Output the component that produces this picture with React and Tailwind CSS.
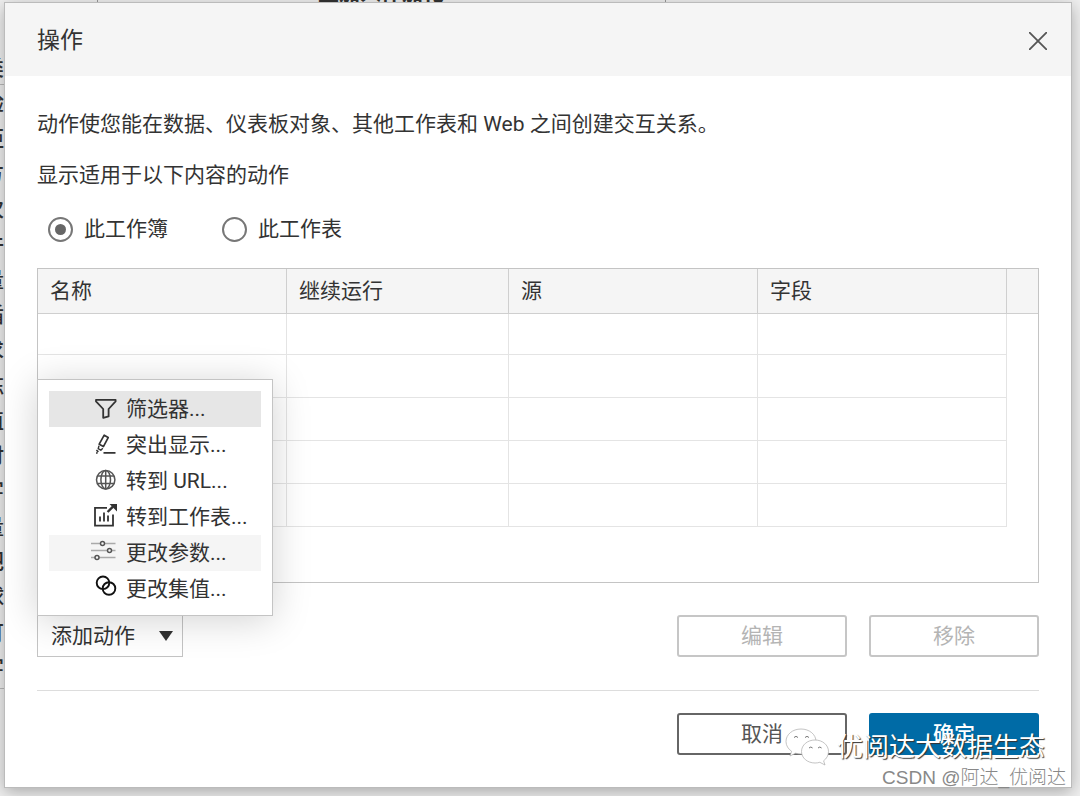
import { useState } from 'react'

const sidebarItems = ['类', '验', '距', '方', '次', '件', '量', '循', '求', '陈', '值', '时', '字', '量', '把', '球', '可', '字']

const columns = [
  { label: '名称', width: 'w-[249px]' },
  { label: '继续运行', width: 'w-[222px]' },
  { label: '源', width: 'w-[249px]' },
  { label: '字段', width: 'w-[249px]' },
]

function FilterIcon() {
  return (
    <svg width="28" height="28" viewBox="0 0 28 28" fill="none" stroke="#333" strokeWidth="1.8" strokeLinejoin="round">
      <path d="M5 4.800h19.600v1.600L17.600 14v7.400l-5.400 1.400V14L5 6.400z" />
    </svg>
  )
}

function HighlightIcon() {
  return (
    <svg width="28" height="28" viewBox="0 0 28 28" fill="none" stroke="#333" strokeWidth="1.7" strokeLinejoin="round">
      <path d="M13.200 4.200l4 2.400-4.800 9-4.200-2.400z" />
      <path d="M8 14.800l-.8 2.800 2.600 1.600 2-2" strokeWidth="1.400" />
      <path d="M12.500 21.800h12M5.400 19.200l2 1.600M5 22h1.600" />
    </svg>
  )
}

function GlobeIcon() {
  return (
    <svg width="28" height="28" viewBox="0 0 28 28" fill="none" stroke="#555" strokeWidth="1.5">
      <circle cx="14.700" cy="12.700" r="9.200" />
      <ellipse cx="14.700" cy="12.700" rx="4.800" ry="9.200" />
      <path d="M14.700 3.500v18.400M6.500 9h16.400M6.500 16.400h16.400" />
    </svg>
  )
}

function SheetIcon() {
  return (
    <svg width="28" height="28" viewBox="0 0 28 28" fill="none" stroke="#333" strokeWidth="1.8">
      <path d="M16 4.800H4v17.800h18V11.500" />
      <path d="M9 18.500v-5M13 18.500v-9M17 18.500v-6" />
      <path d="M16.600 9L22 3.600" strokeWidth="2.400" />
      <path d="M18.500 1H26v7.500z" fill="#333" stroke="none" />
    </svg>
  )
}

function ParameterIcon() {
  return (
    <svg width="28" height="28" viewBox="0 0 28 28" fill="none">
      <path d="M0 4.500h24.500M0 11.500h24.500M0 18.500h24.500" stroke="#aaa" strokeWidth="1.300" />
      <g fill="#f5f5f5" stroke="#555" strokeWidth="1.500">
        <circle cx="11.500" cy="4.500" r="2" />
        <circle cx="18.500" cy="11.500" r="2" />
        <circle cx="6" cy="18.500" r="2" />
      </g>
    </svg>
  )
}

function SetIcon() {
  return (
    <svg width="28" height="28" viewBox="0 0 28 28" fill="none" stroke="#111" strokeWidth="1.900">
      <circle cx="12" cy="7.800" r="6.300" />
      <circle cx="18" cy="13.500" r="6.300" />
    </svg>
  )
}

const menuItems = [
  { label: '筛选器...', icon: FilterIcon, className: 'bg-[#e6e6e6]' },
  { label: '突出显示...', icon: HighlightIcon, className: '' },
  { label: '转到 URL...', icon: GlobeIcon, className: '' },
  { label: '转到工作表...', icon: SheetIcon, className: '' },
  { label: '更改参数...', icon: ParameterIcon, className: 'bg-[#f5f5f5]' },
  { label: '更改集值...', icon: SetIcon, className: '' },
]

function ScopeOption({ value, label, scope, onChange }) {
  return (
    <label className="flex items-center gap-[11px]">
      <input
        type="radio"
        name="scope"
        value={value}
        checked={scope === value}
        onChange={() => onChange(value)}
        className="grid size-[25px] appearance-none place-content-center rounded-full border-2 border-[#777] bg-white before:size-[11px] before:rounded-full before:bg-transparent checked:before:bg-[#666]"
      />
      {label}
    </label>
  )
}

function AddActionMenu() {
  return (
    <div className="relative">
      <button
        type="button"
        aria-haspopup="menu"
        className="flex h-[42px] items-center gap-6 border border-[#c4c4c4] bg-white pr-[9px] pl-[13px]"
      >
        添加动作
        <svg width="14" height="10" viewBox="0 0 14 10" fill="#333">
          <path d="M0 0h14L7 10z" />
        </svg>
      </button>
      <div
        role="menu"
        className="absolute bottom-[41px] left-0 w-[236px] border border-[#c4c4c4] bg-white px-[11px] pt-[11px] pb-2 shadow-[0_4px_36px_rgba(0,0,0,0.18)]"
      >
        {menuItems.map(({ label, icon: Icon, className }) => (
          <button
            key={label}
            type="button"
            role="menuitem"
            className={`flex h-9 w-full items-center gap-[7px] pl-[42px] whitespace-nowrap ${className}`}
          >
            <Icon />
            {label}
          </button>
        ))}
      </div>
    </div>
  )
}

function Watermark() {
  return (
    <div className="pointer-events-none absolute right-[14px] bottom-[6px] flex flex-col items-end text-white">
      <div className="mr-[21px] flex items-center gap-2">
        <svg width="44" height="38" viewBox="0 0 44 38" fill="#fff" stroke="#aaa" strokeWidth="0.7">
          <path d="M16 1C7.500 1 1 6.500 1 13.500c0 4 2.200 7.500 5.600 9.800L5 28l5.600-2.800c1.700.5 3.500.8 5.400.8 8.500 0 15-5.500 15-12.500S24.500 1 16 1z" />
          <path d="M30 12c-7.500 0-13.500 5-13.500 11.500S22.500 35 30 35c1.700 0 3.300-.2 4.800-.7L40 37l-1.400-4.200c3-2.100 4.900-5.500 4.900-9.300C43.500 17 37.500 12 30 12z" />
          <g fill="none" stroke="#777" strokeWidth="1">
            <path d="M9 9.500q2-2.400 4 0M20 9.500q2-2.400 4 0M24 20q1.800-2 3.600 0M33 20q1.800-2 3.600 0" />
          </g>
        </svg>
        <span className="text-[26px] leading-9 [text-shadow:1px_1px_1px_#333]">优阅达大数据生态</span>
      </div>
      <span className="font-['Liberation_Sans','Noto_Sans_CJK_SC',sans-serif] text-[19px] leading-6 font-light text-[#888]">
        CSDN @阿达_优阅达
      </span>
    </div>
  )
}

export default function App() {
  const [scope, setScope] = useState('workbook')

  return (
    <div className="relative isolate flex min-h-screen flex-col overflow-hidden bg-[#f0f0f0] pt-[2px] pr-2 pb-2 pl-1 font-[Roboto,'Noto_Sans_CJK_SC',sans-serif] text-[21px] leading-[30px] text-[#333]">
      <div className="absolute top-[53px] bottom-[113px] -left-[17px] -z-10 flex flex-col justify-between font-medium" aria-hidden="true">
        {sidebarItems.map((item, index) => (
          <span key={index}>{item}</span>
        ))}
      </div>
      <div className="absolute top-[84px] bottom-[107px] left-0 -z-10 w-1 border-y border-[#bbb]"></div>
      <div className="absolute top-0 left-[97px] -z-10 h-1 w-[569px] border-x border-[#999]"></div>
      <div className="absolute -top-[19px] left-[318px] -z-10 leading-6 font-bold" aria-hidden="true">
        重加入作加化
      </div>

      <section
        role="dialog"
        aria-labelledby="dialog-title"
        className="flex flex-1 flex-col border border-[#bbb] bg-white shadow-[0_4px_16px_rgba(0,0,0,0.3)]"
      >
        <header className="flex h-[73px] items-center justify-between bg-[#f5f5f5] pt-[3px] pr-6 pl-8">
          <h1 id="dialog-title" className="text-[23px]">操作</h1>
          <button type="button" aria-label="关闭">
            <svg width="18" height="18" viewBox="0 0 18 18" stroke="#555" strokeWidth="1.800">
              <path d="M0 0l18 18M18 0L0 18" />
            </svg>
          </button>
        </header>

        <div className="px-8 pt-[33px]">
          <p>动作使您能在数据、仪表板对象、其他工作表和 Web 之间创建交互关系。</p>
          <fieldset className="mt-[21px]">
            <legend>显示适用于以下内容的动作</legend>
            <div className="mt-6 flex gap-[54px] pl-[11px]">
              <ScopeOption value="workbook" label="此工作簿" scope={scope} onChange={setScope} />
              <ScopeOption value="sheet" label="此工作表" scope={scope} onChange={setScope} />
            </div>
          </fieldset>

          {/* Actions */}
          <div className="mt-6 border border-[#c4c4c4] pb-[55px]">
            <table className="w-full table-fixed border-separate border-spacing-0 text-left">
              <thead className="bg-[#f5f5f5]">
                <tr className="h-[45px]">
                  {columns.map(({ label, width }) => (
                    <th key={label} scope="col" className={`border-r border-b border-[#cfcfcf] px-3 font-normal ${width}`}>
                      {label}
                    </th>
                  ))}
                  <td className="w-[31px] border-b border-[#cfcfcf]"></td>
                </tr>
              </thead>
              <tbody>
                {[0, 1, 2, 3, 4].map((row) => (
                  <tr key={row} className="h-[43px] first:h-[41px]">
                    {columns.map(({ label }) => (
                      <td key={label} className="border-r border-b border-[#e4e4e4]"></td>
                    ))}
                    <td></td>
                  </tr>
                ))}
              </tbody>
            </table>
          </div>

          <div className="mt-8 flex items-center justify-between">
            <AddActionMenu />
            <div className="flex gap-[22px] text-[#b4b4b4]">
              <button type="button" disabled className="h-[42px] w-[170px] rounded-[3px] border-2 border-[#c6c6c6]">编辑</button>
              <button type="button" disabled className="h-[42px] w-[170px] rounded-[3px] border-2 border-[#c6c6c6]">移除</button>
            </div>
          </div>

          <footer className="mt-[33px] flex justify-end gap-[22px] border-t border-[#ddd] pt-[22px]">
            <button type="button" className="h-[42px] w-[170px] rounded-[3px] border-2 border-[#666] text-[#555]">取消</button>
            <button type="button" className="h-[42px] w-[170px] rounded-[3px] bg-[#006ba6] font-medium text-white">确定</button>
          </footer>
        </div>
      </section>

      <Watermark />
    </div>
  )
}
